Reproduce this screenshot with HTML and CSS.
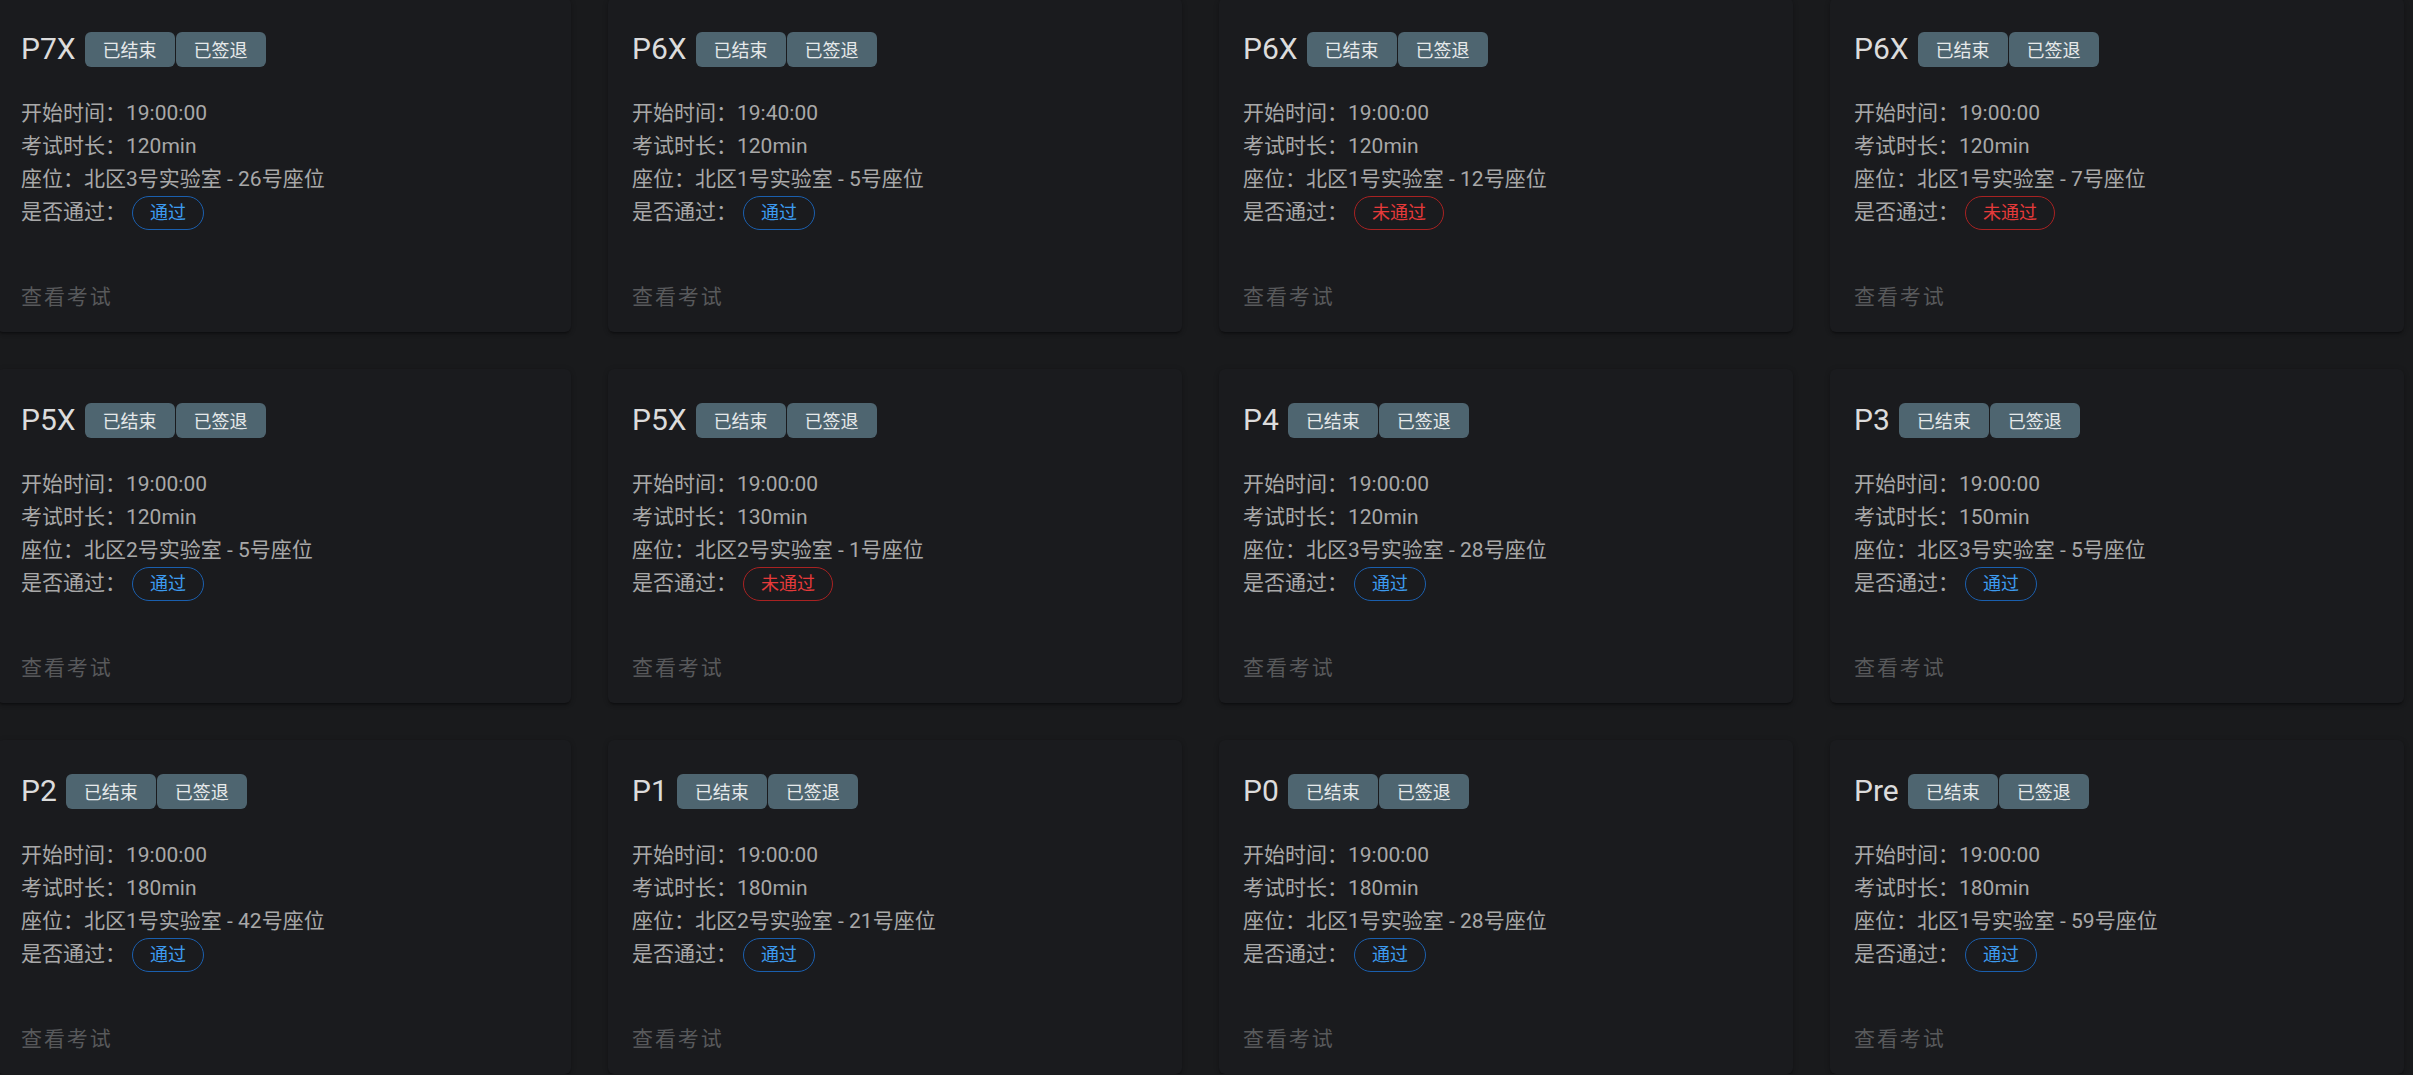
FILE: index.html
```html
<!DOCTYPE html>
<html lang="zh-CN">
<head>
<meta charset="utf-8">
<title>考试列表</title>
<link rel="stylesheet" href="styles.css">
</head>
<body>
<div class="grid">
  <div class="card">
    <div class="card-title"><span class="name">P7X</span><span class="tag">已结束</span><span class="tag">已签退</span></div>
    <div class="card-text">
      <div>开始时间：19:00:00</div>
      <div>考试时长：120min</div>
      <div>座位：北区3号实验室 - 26号座位</div>
      <div>是否通过：<span class="pill pass">通过</span></div>
    </div>
    <div class="card-actions"><span class="btn">查看考试</span></div>
  </div>
  <div class="card">
    <div class="card-title"><span class="name">P6X</span><span class="tag">已结束</span><span class="tag">已签退</span></div>
    <div class="card-text">
      <div>开始时间：19:40:00</div>
      <div>考试时长：120min</div>
      <div>座位：北区1号实验室 - 5号座位</div>
      <div>是否通过：<span class="pill pass">通过</span></div>
    </div>
    <div class="card-actions"><span class="btn">查看考试</span></div>
  </div>
  <div class="card">
    <div class="card-title"><span class="name">P6X</span><span class="tag">已结束</span><span class="tag">已签退</span></div>
    <div class="card-text">
      <div>开始时间：19:00:00</div>
      <div>考试时长：120min</div>
      <div>座位：北区1号实验室 - 12号座位</div>
      <div>是否通过：<span class="pill fail">未通过</span></div>
    </div>
    <div class="card-actions"><span class="btn">查看考试</span></div>
  </div>
  <div class="card">
    <div class="card-title"><span class="name">P6X</span><span class="tag">已结束</span><span class="tag">已签退</span></div>
    <div class="card-text">
      <div>开始时间：19:00:00</div>
      <div>考试时长：120min</div>
      <div>座位：北区1号实验室 - 7号座位</div>
      <div>是否通过：<span class="pill fail">未通过</span></div>
    </div>
    <div class="card-actions"><span class="btn">查看考试</span></div>
  </div>

  <div class="card">
    <div class="card-title"><span class="name">P5X</span><span class="tag">已结束</span><span class="tag">已签退</span></div>
    <div class="card-text">
      <div>开始时间：19:00:00</div>
      <div>考试时长：120min</div>
      <div>座位：北区2号实验室 - 5号座位</div>
      <div>是否通过：<span class="pill pass">通过</span></div>
    </div>
    <div class="card-actions"><span class="btn">查看考试</span></div>
  </div>
  <div class="card">
    <div class="card-title"><span class="name">P5X</span><span class="tag">已结束</span><span class="tag">已签退</span></div>
    <div class="card-text">
      <div>开始时间：19:00:00</div>
      <div>考试时长：130min</div>
      <div>座位：北区2号实验室 - 1号座位</div>
      <div>是否通过：<span class="pill fail">未通过</span></div>
    </div>
    <div class="card-actions"><span class="btn">查看考试</span></div>
  </div>
  <div class="card">
    <div class="card-title"><span class="name">P4</span><span class="tag">已结束</span><span class="tag">已签退</span></div>
    <div class="card-text">
      <div>开始时间：19:00:00</div>
      <div>考试时长：120min</div>
      <div>座位：北区3号实验室 - 28号座位</div>
      <div>是否通过：<span class="pill pass">通过</span></div>
    </div>
    <div class="card-actions"><span class="btn">查看考试</span></div>
  </div>
  <div class="card">
    <div class="card-title"><span class="name">P3</span><span class="tag">已结束</span><span class="tag">已签退</span></div>
    <div class="card-text">
      <div>开始时间：19:00:00</div>
      <div>考试时长：150min</div>
      <div>座位：北区3号实验室 - 5号座位</div>
      <div>是否通过：<span class="pill pass">通过</span></div>
    </div>
    <div class="card-actions"><span class="btn">查看考试</span></div>
  </div>

  <div class="card">
    <div class="card-title"><span class="name">P2</span><span class="tag">已结束</span><span class="tag">已签退</span></div>
    <div class="card-text">
      <div>开始时间：19:00:00</div>
      <div>考试时长：180min</div>
      <div>座位：北区1号实验室 - 42号座位</div>
      <div>是否通过：<span class="pill pass">通过</span></div>
    </div>
    <div class="card-actions"><span class="btn">查看考试</span></div>
  </div>
  <div class="card">
    <div class="card-title"><span class="name">P1</span><span class="tag">已结束</span><span class="tag">已签退</span></div>
    <div class="card-text">
      <div>开始时间：19:00:00</div>
      <div>考试时长：180min</div>
      <div>座位：北区2号实验室 - 21号座位</div>
      <div>是否通过：<span class="pill pass">通过</span></div>
    </div>
    <div class="card-actions"><span class="btn">查看考试</span></div>
  </div>
  <div class="card">
    <div class="card-title"><span class="name">P0</span><span class="tag">已结束</span><span class="tag">已签退</span></div>
    <div class="card-text">
      <div>开始时间：19:00:00</div>
      <div>考试时长：180min</div>
      <div>座位：北区1号实验室 - 28号座位</div>
      <div>是否通过：<span class="pill pass">通过</span></div>
    </div>
    <div class="card-actions"><span class="btn">查看考试</span></div>
  </div>
  <div class="card">
    <div class="card-title"><span class="name">Pre</span><span class="tag">已结束</span><span class="tag">已签退</span></div>
    <div class="card-text">
      <div>开始时间：19:00:00</div>
      <div>考试时长：180min</div>
      <div>座位：北区1号实验室 - 59号座位</div>
      <div>是否通过：<span class="pill pass">通过</span></div>
    </div>
    <div class="card-actions"><span class="btn">查看考试</span></div>
  </div>
</div>
</body>
</html>
```
FILE: styles.css
```css
html, body {
  margin: 0;
  padding: 0;
  background: #191a1c;
  overflow: hidden;
}
body {
  font-family: Roboto, "Noto Sans CJK SC", sans-serif;
  color: #a9a9a9;
}
.grid {
  display: grid;
  grid-template-columns: repeat(4, 574px);
  grid-auto-rows: 334px;
  column-gap: 37px;
  row-gap: 37px;
  margin: -2px 0 0 -3px;
}
.card {
  background: #1a1b1e;
  border-radius: 6px;
  box-shadow: 0 3px 2px -2px rgba(0,0,0,0.3), 0 2px 3px 0 rgba(0,0,0,0.16), 0 1px 6px 0 rgba(0,0,0,0.12);
  display: flex;
  flex-direction: column;
}
.card-title {
  display: flex;
  align-items: center;
  height: 48px;
  margin-top: 26px;
  padding: 0 24px;
}
.name {
  font-size: 30px;
  color: #dcdcdc;
  margin-right: 9px;
}
.tag {
  display: inline-flex;
  align-items: center;
  justify-content: center;
  height: 35px;
  width: 90px;
  box-sizing: border-box;
  background: #4e6570;
  color: #e6e9ea;
  font-size: 18px;
  border-radius: 6px;
  margin-right: 1px;
  margin-top: 2px;
}
.card-text {
  padding: 0 24px;
  margin-top: 25px;
  font-size: 21px;
  line-height: 33px;
  color: #a8a8a8;
}
.pill {
  display: inline-flex;
  align-items: center;
  justify-content: center;
  height: 34px;
  padding: 0 17px;
  border-radius: 17px;
  font-size: 18px;
  line-height: 1;
  margin-left: 6px;
  vertical-align: middle;
  box-sizing: border-box;
}
.pass {
  border: 1.5px solid #1a5fae;
  color: #3d9bf0;
}
.fail {
  border: 1.5px solid #a82222;
  color: #e53a3a;
}
.card-actions {
  margin-top: auto;
  padding: 12px 12px 10px;
}
.btn {
  display: inline-flex;
  align-items: center;
  height: 54px;
  padding: 0 12px;
  font-size: 21px;
  letter-spacing: 1.9px;
  color: #58595b;
}
```
